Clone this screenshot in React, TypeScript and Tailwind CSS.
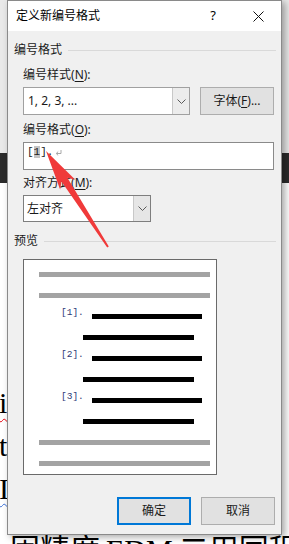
import React from "react";

function Chevron() {
  return (
    <svg width="9" height="5" viewBox="0 0 9 5">
      <path d="M0.5 0.5 L4.5 4.5 L8.5 0.5" fill="none" stroke="#5a5a5a" strokeWidth="1" />
    </svg>
  );
}

function DocRow({ left, right, leftClass = "" }: { left: string; right: string; leftClass?: string }) {
  return (
    <div className="h-[43px] leading-[43px] flex justify-between whitespace-nowrap bg-white">
      <span className={"-ml-[1px] " + leftClass}>{left}</span>
      <span className="w-[6px]">{right}</span>
    </div>
  );
}

function Label({ text, mn }: { text: string; mn: string }) {
  return (
    <div className="h-[16px] leading-[16px] text-[12px] text-[#1a1a1a]">
      {text}(<span className="underline underline-offset-[2px]">{mn}</span>):
    </div>
  );
}

function Bar({ pl, w, color }: { pl: string; w: string; color: string }) {
  return (
    <div className={"h-[21px] flex " + pl}>
      <div className={"h-[5px] " + w + " " + color} />
    </div>
  );
}

function ItemRow({ n }: { n: number }) {
  return (
    <div className="h-[21px] flex pl-[37px]">
      <span className="w-[31px] -mt-[7px] h-[12px] leading-[12px] text-[9.5px] text-[#2e3b78] font-[Liberation_Mono,monospace]">
        [{n}].
      </span>
      <div className="h-[5px] w-[110px] bg-black" />
    </div>
  );
}

export default function App() {
  return (
    <div className="relative w-[289px] h-[544px] overflow-hidden grid bg-white">
      {/* document behind the dialog */}
      <div className="col-start-1 row-start-1 flex flex-col font-[Liberation_Serif,Noto_Sans_CJK_SC,serif] text-[30px] text-black">
        <div className="h-[153px] shrink-0 bg-[#e9e9e9]" />
        <div className="h-[30px] shrink-0 bg-[#2b2b2b]" />
        <div className="h-[155px] shrink-0 bg-white" />
        <DocRow left="" right="转" />
        <DocRow left="i" right="C" leftClass="underline decoration-wavy decoration-red-600 underline-offset-[5px] decoration-1" />
        <DocRow left="t" right="s" />
        <DocRow left="I" right="e" leftClass="underline decoration-wavy decoration-[#3a6fd8] underline-offset-[4px] decoration-1" />
        <div className="h-[18px] shrink-0" />
        <div className="h-[43px] leading-[43px] whitespace-nowrap -ml-[20px]">
          ，固精度<span className="mx-[6px]">EDM</span>二用同程测量
        </div>
      </div>

      {/* dialog */}
      <div className="col-start-1 row-start-1 ml-[7px] w-[275px] h-[535px] border border-[#8a8a8a] bg-[#f0f0f0] flex flex-col shadow-[3px_2px_7px_rgba(0,0,0,0.35)] font-[Noto_Sans,Noto_Sans_CJK_SC,sans-serif] text-[12px] text-[#1a1a1a] z-10">
        <div className="h-[30px] shrink-0 bg-white flex items-center pl-[8px] pr-[17px]">
          <span className="text-[12px] text-black">定义新编号格式</span>
          <span className="flex-1" />
          <span className="text-[13px] text-black">?</span>
          <svg className="ml-[37px]" width="11" height="11" viewBox="0 0 11 11">
            <path d="M0.5 0.5 L10.5 10.5 M10.5 0.5 L0.5 10.5" stroke="#111" strokeWidth="1" />
          </svg>
        </div>

        <div className="flex flex-col pl-[6px] pr-[5px]">
          <div className="mt-[11px] h-[16px] flex items-center gap-[6px]">
            <span className="leading-[16px]">编号格式</span>
            <div className="flex-1 h-px bg-[#d9d9d9]" />
          </div>

          <div className="pl-[9px] pr-[1px] flex flex-col">
            <div className="mt-[9px]">
              <Label text="编号样式" mn="N" />
            </div>
            <div className="mt-[4px] flex gap-[10px]">
              <div className="w-[167px] h-[28px] border border-[#a0a0a0] bg-white flex">
                <span className="flex-1 pl-[4px] leading-[26px] text-[12px]">1, 2, 3, ...</span>
                <div className="w-[17px] border-l border-[#c8c8c8] bg-[#ececec] flex items-center justify-center">
                  <Chevron />
                </div>
              </div>
              <div className="w-[74px] h-[28px] border border-[#adadad] bg-[#e1e1e1] flex items-center justify-center">
                字体(<span className="underline underline-offset-[2px]">F</span>)...
              </div>
            </div>

            <div className="mt-[7px]">
              <Label text="编号格式" mn="O" />
            </div>
            <div className="mt-[4px] w-[251px] h-[28px] border border-[#8a8a8a] bg-white flex items-start pl-[3px] pt-px">
              <span className="font-[Liberation_Mono,monospace] text-[11px] leading-[16px] text-[#222]">
                [<span className="bg-[#c4c4c4]">1</span>].
              </span>
              <svg className="ml-[2px] mt-[6px]" width="7" height="6" viewBox="0 0 7 6">
                <path d="M6 0 V3.5 H1.5 M3.2 1.6 L1.2 3.5 L3.2 5.4" fill="none" stroke="#a8a8a8" strokeWidth="1" />
              </svg>
            </div>

            <div className="mt-[5px]">
              <Label text="对齐方式" mn="M" />
            </div>
            <div className="mt-[4px] w-[128px] h-[27px] border border-[#7e7e7e] bg-white flex">
              <span className="flex-1 pl-[3px] leading-[25px]">左对齐</span>
              <div className="w-[17px] border-l border-[#c8c8c8] bg-[#e6e6e6] flex items-center justify-center">
                <Chevron />
              </div>
            </div>
          </div>

          <div className="mt-[11px] h-[16px] flex items-center gap-[6px]">
            <span className="leading-[16px]">预览</span>
            <div className="flex-1 h-px bg-[#d9d9d9]" />
          </div>

          <div className="pl-[9px] pr-[1px] flex flex-col">
            <div className="mt-[10px] w-[194px] h-[216px] border border-[#6a6a6a] bg-white flex flex-col pt-[12px]">
              <Bar pl="pl-[15px]" w="w-[171px]" color="bg-[#a3a3a3]" />
              <Bar pl="pl-[15px]" w="w-[171px]" color="bg-[#a3a3a3]" />
              <ItemRow n={1} />
              <Bar pl="pl-[59px]" w="w-[111px]" color="bg-black" />
              <ItemRow n={2} />
              <Bar pl="pl-[59px]" w="w-[111px]" color="bg-black" />
              <ItemRow n={3} />
              <Bar pl="pl-[59px]" w="w-[111px]" color="bg-black" />
              <Bar pl="pl-[15px]" w="w-[171px]" color="bg-[#a3a3a3]" />
              <div className="h-[5px] pl-[15px] flex">
                <div className="h-[5px] w-[171px] bg-[#a3a3a3]" />
              </div>
            </div>

            <div className="mt-[22px] flex justify-end gap-[10px]">
              <div className="w-[74px] h-[28px] border-2 border-[#0078d7] bg-[#e1e1e1] flex items-center justify-center">
                确定
              </div>
              <div className="w-[74px] h-[28px] border border-[#adadad] bg-[#e1e1e1] flex items-center justify-center">
                取消
              </div>
            </div>
          </div>
        </div>
      </div>

      {/* red annotation arrow */}
      <svg className="absolute left-0 top-0 z-20 pointer-events-none" width="289" height="544" viewBox="0 0 289 544">
        <polygon
          points="46,151 75.3,179.7 67.4,177.7 108.8,246.5 107.2,247.5 61.5,181.5 60.1,189.5"
          fill="#f03a3a"
        />
      </svg>
    </div>
  );
}
